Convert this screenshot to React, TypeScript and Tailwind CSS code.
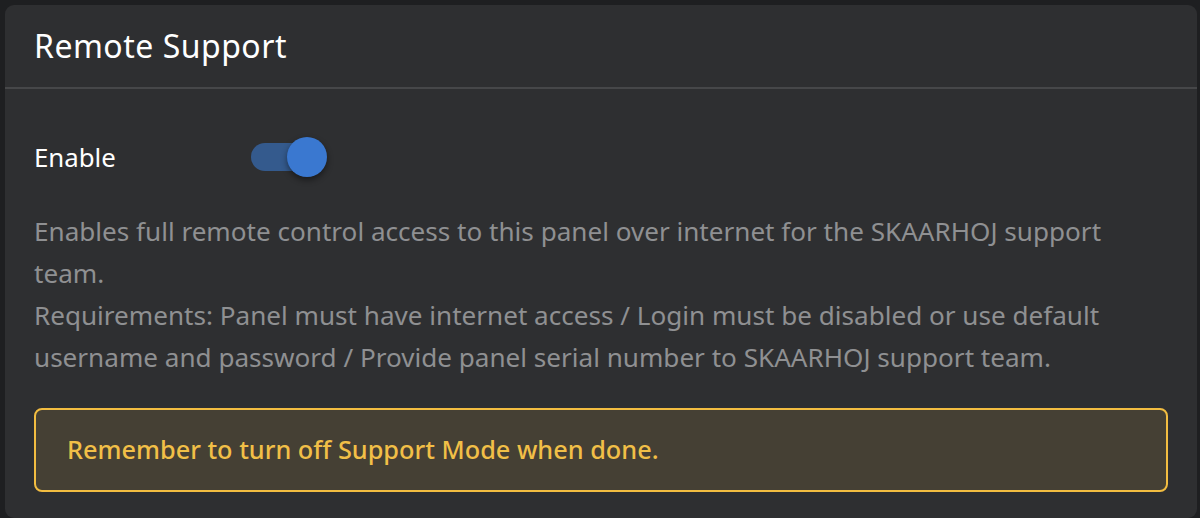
import React from "react";

export default function App() {
  return (
    <div
      className="w-[1200px] h-[518px] bg-[#1e1f21] pt-[5px] pl-[5px] pr-[3px] overflow-hidden"
      style={{ fontFamily: '"Noto Sans", "Open Sans", sans-serif' }}
    >
      <div className="h-[513px] rounded-[9px] bg-[#2e2f31] flex flex-col">
        <div className="h-[84px] flex items-center px-[29px] border-b-2 border-[#464749]">
          <h1 className="text-[32px] text-white leading-none tracking-[0.5px]">Remote Support</h1>
        </div>
        <div className="px-[29px] pt-[48px]">
          <div className="flex items-center h-[40px]">
            <span className="text-[25.8px] text-white w-[217px]">Enable</span>
            <div className="relative w-[76px] h-[40px] flex items-center">
              <div className="w-[60px] h-[28px] rounded-full bg-[#345a8d]" />
              <div className="absolute right-0 top-0 w-[40px] h-[40px] rounded-full bg-[#3a78d0] shadow-[0_3px_6px_rgba(0,0,0,0.45)]" />
            </div>
          </div>
          <p className="mt-[33px] text-[26.1px] leading-[42px] text-[#8f9092]">
            Enables full remote control access to this panel over internet for the SKAARHOJ support team.
            <br />
            Requirements: Panel must have internet access / Login must be disabled or use default username and password / Provide panel serial number to SKAARHOJ support team.
          </p>
          <div className="mt-[30px] h-[84px] rounded-[8px] border-2 border-[#f2bd41] bg-[#454034] flex items-center px-[31px]">
            <span className="text-[25.3px] font-medium text-[#f1bf47]">Remember to turn off Support Mode when done.</span>
          </div>
        </div>
      </div>
    </div>
  );
}
